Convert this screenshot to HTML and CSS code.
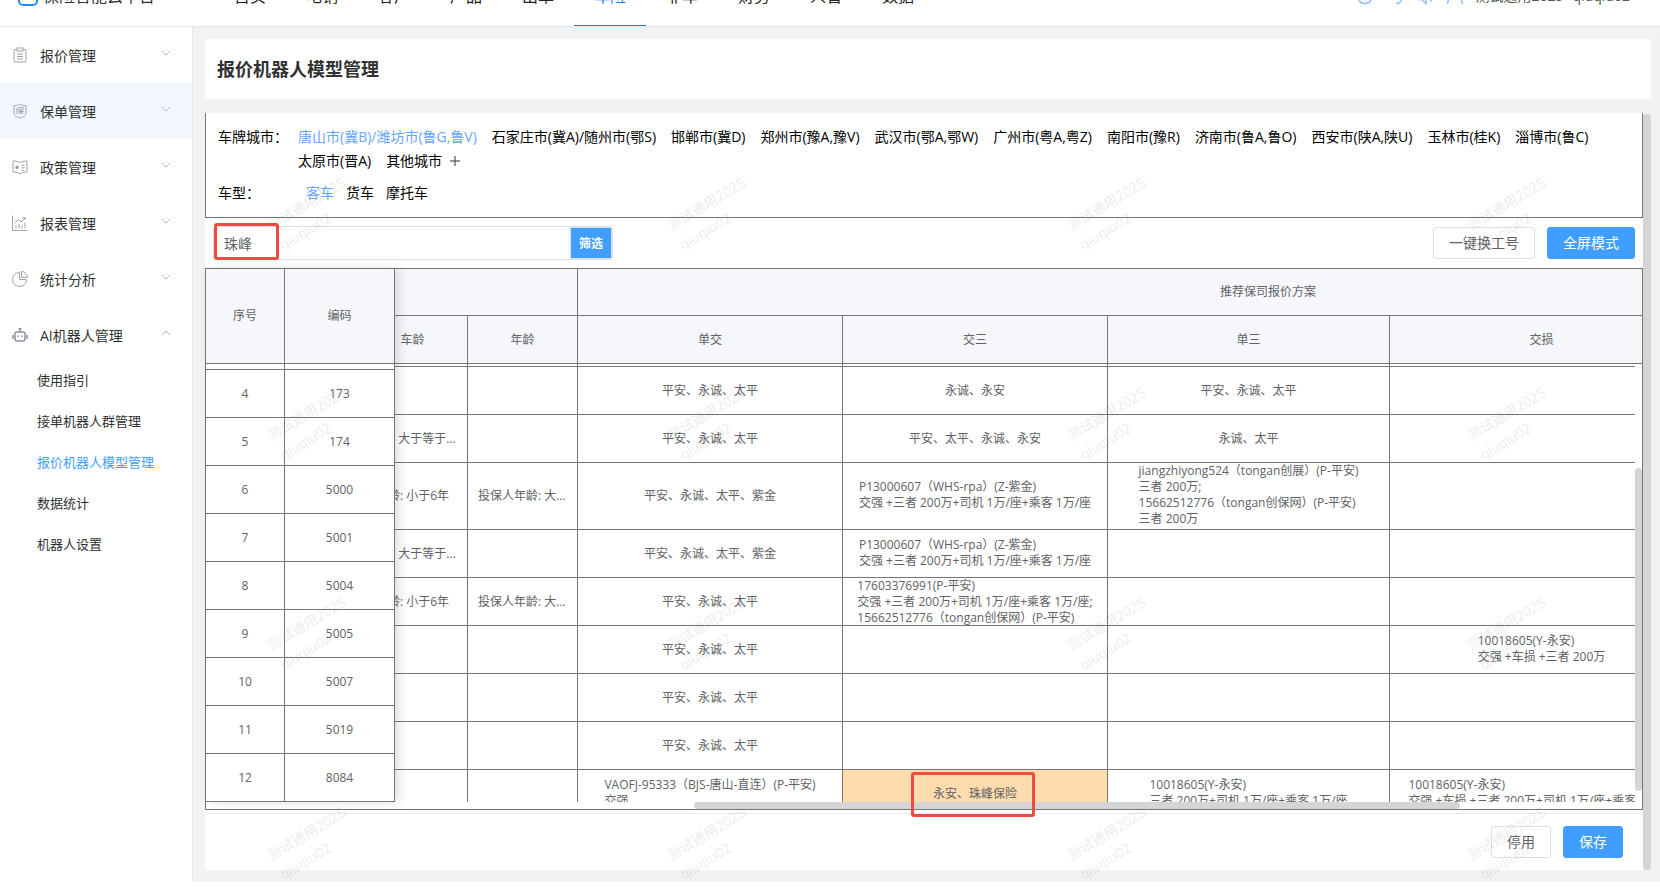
FILE: index.html
```html
<!DOCTYPE html>
<html lang="zh-CN">
<head>
  <meta charset="UTF-8">
  <meta name="viewport" content="width=device-width, initial-scale=1.0">
  <title>报价机器人模型管理</title>
  <link rel="stylesheet" href="styles.css">
</head>
<body>
  <!-- Header -->
  <header class="header">
    <a class="logo" href="#">
      <svg width="20" height="20" viewBox="0 0 20 20" fill="none" stroke="#1890ff" stroke-width="2"><rect x="1" y="1" width="18" height="18" rx="4"/></svg>
      <span>保险智能云平台</span>
    </a>
    <nav class="nav">
      <a href="#">首页</a>
      <a href="#">电销</a>
      <a href="#">客户</a>
      <a href="#">产品</a>
      <a href="#">出单</a>
      <a href="#" class="active">车险</a>
      <a href="#">非车</a>
      <a href="#">财务</a>
      <a href="#">人管</a>
      <a href="#">数据</a>
    </nav>
    <div class="user">
      <svg width="18" height="18" viewBox="0 0 18 18"><path d="M9 1l2 1.500 2.500-.200 1 2.300 2 1.400-.500 3 .500 3-2 1.400-1 2.300-2.500-.200L9 17l-2-1.500-2.500.200-1-2.300-2-1.400.500-3-.500-3 2-1.400 1-2.300 2.500.200z"/><circle cx="9" cy="9" r="3.500"/></svg>
      <svg width="18" height="18" viewBox="0 0 18 18"><path d="M3 9a6 6 0 0 1 12 0v3c0 3-2 4.500-5 4.500M3 9v3h2V8M15 9v3h-2V8"/></svg>
      <svg width="18" height="18" viewBox="0 0 18 18"><path d="M2 6.500h3.500L10 2.500v14l-4.500-4H2zM12.500 6.500c1.300 1.500 1.300 4 0 5.500M14.500 4c3 3 3 7.500 0 10.500"/></svg>
      <svg width="18" height="18" viewBox="0 0 18 18"><circle cx="9" cy="5" r="4"/><path d="M1.500 17c.500-5 3.500-7.500 7.500-7.500s7 2.500 7.500 7.500"/></svg>
      <span>测试通用2025--qiuqiu02</span>
    </div>
  </header>

  <div class="layout">
    <!-- Sidebar -->
    <aside class="sidebar">
      <a class="menu-item" href="#">
        <svg class="menu-icon" viewBox="0 0 16 16"><rect x="2" y="2.500" width="12" height="12.500" rx="1"/><rect x="5" y="1" width="6" height="3" fill="#fff"/><path d="M5 7h6M5 9.500h6M5 12h6"/></svg>
        <span>报价管理</span>
        <svg class="arrow" viewBox="0 0 10 6"><path d="M1 1l4 4 4-4"/></svg>
      </a>
      <a class="menu-item hover" href="#">
        <svg class="menu-icon" viewBox="0 0 16 16"><path d="M2 2.500c4 0 4.500-.500 6-1.500 1.500 1 2 1.500 6 1.500V10c0 2.500-3 4-6 5-3-1-6-2.500-6-5z"/><path d="M5.500 4.500L4.500 7M5 6.500V11M7 4.500h4v2.500H7zM6.500 8.500h5M9 7v4.500M8.500 9L6.500 11M9.500 9l2 2"/></svg>
        <span>保单管理</span>
        <svg class="arrow" viewBox="0 0 10 6"><path d="M1 1l4 4 4-4"/></svg>
      </a>
      <a class="menu-item" href="#">
        <svg class="menu-icon" viewBox="0 0 16 16"><path d="M1 2c3 0 5 .500 7 1.500C10 2.500 12 2 15 2v11c-3 0-5 .500-7 2-2-1.500-4-2-7-2z"/><path d="M5 6l.800 1.500 1.500.200-1.100 1 .200 1.600L5 9.500l-1.400.800.200-1.600-1.100-1 1.500-.200z" fill="#909399" stroke="none"/><path d="M9.500 6.500l3-.500M9.500 9l3-.500M9.500 11.500l3-.500"/></svg>
        <span>政策管理</span>
        <svg class="arrow" viewBox="0 0 10 6"><path d="M1 1l4 4 4-4"/></svg>
      </a>
      <a class="menu-item" href="#">
        <svg class="menu-icon" viewBox="0 0 16 16"><path d="M.500 .500v15h15M4 13.500v-3M7 13.500V9M10 13.500V10M13 13.500V7.500M3 8l3.500-3.500L9 7l4-4.500M10.500 2.500H13V5"/></svg>
        <span>报表管理</span>
        <svg class="arrow" viewBox="0 0 10 6"><path d="M1 1l4 4 4-4"/></svg>
      </a>
      <a class="menu-item" href="#">
        <svg class="menu-icon" viewBox="0 0 16 16"><path d="M7.500 1.500a7 7 0 1 0 7 7h-7z"/><path d="M9.500 .500v6h6a6 6 0 0 0-6-6z"/></svg>
        <span>统计分析</span>
        <svg class="arrow" viewBox="0 0 10 6"><path d="M1 1l4 4 4-4"/></svg>
      </a>
      <a class="menu-item" href="#">
        <svg class="menu-icon robot" viewBox="0 0 16 16"><rect x="3" y="5" width="10" height="9" rx="2"/><path d="M8 1v4M1 8v4M15 8v4M6 8.500v1.500M10 8.500v1.500M6.500 1.800h3"/></svg>
        <span>AI机器人管理</span>
        <svg class="arrow" viewBox="0 0 10 6"><path d="M1 5l4-4 4 4"/></svg>
      </a>
      <div class="submenu">
        <a href="#">使用指引</a>
        <a href="#">接单机器人群管理</a>
        <a href="#" class="active">报价机器人模型管理</a>
        <a href="#">数据统计</a>
        <a href="#">机器人设置</a>
      </div>
    </aside>

    <!-- Main -->
    <main class="main">
      <div class="title-card">
        <h1>报价机器人模型管理</h1>
      </div>

      <div class="scroll-area">
        <div class="panel">
          <!-- Filters -->
          <div class="filters">
            <div class="filter-row">
              <span class="filter-label">车牌城市：</span>
              <div class="filter-options">
                <a href="#" class="active">唐山市(冀B)/潍坊市(鲁G,鲁V)</a>
                <a href="#">石家庄市(冀A)/随州市(鄂S)</a>
                <a href="#">邯郸市(冀D)</a>
                <a href="#">郑州市(豫A,豫V)</a>
                <a href="#">武汉市(鄂A,鄂W)</a>
                <a href="#">广州市(粤A,粤Z)</a>
                <a href="#">南阳市(豫R)</a>
                <a href="#">济南市(鲁A,鲁O)</a>
                <a href="#">西安市(陕A,陕U)</a>
                <a href="#">玉林市(桂K)</a>
                <a href="#">淄博市(鲁C)</a>
                <a href="#">太原市(晋A)</a>
                <a href="#" class="more">其他城市 <svg width="10" height="10" viewBox="0 0 10 10"><path d="M5 0v10M0 5h10"/></svg></a>
              </div>
            </div>
            <div class="filter-row">
              <span class="filter-label">车型：</span>
              <div class="filter-options types">
                <a href="#" class="active">客车</a>
                <a href="#">货车</a>
                <a href="#">摩托车</a>
              </div>
            </div>
          </div>

          <!-- Toolbar -->
          <div class="toolbar">
            <div class="search">
              <input type="text" value="珠峰" aria-label="搜索">
              <button type="button">筛选</button>
              <div class="mark mark-search"></div>
            </div>
            <div class="toolbar-buttons">
              <button type="button" class="btn">一键换工号</button>
              <button type="button" class="btn btn-primary">全屏模式</button>
            </div>
          </div>

          <!-- Table -->
          <div class="grid">
            <div class="grid-fixed">
              <table class="fixed-table">
                <colgroup><col class="w-index"><col class="w-narrow"></colgroup>
                <thead>
                  <tr><th>序号</th><th>编码</th></tr>
                </thead>
                <tbody>
                  <tr class="cut"><td></td><td></td></tr>
                  <tr><td>4</td><td>173</td></tr>
                  <tr><td>5</td><td>174</td></tr>
                  <tr><td>6</td><td>5000</td></tr>
                  <tr><td>7</td><td>5001</td></tr>
                  <tr><td>8</td><td>5004</td></tr>
                  <tr><td>9</td><td>5005</td></tr>
                  <tr><td>10</td><td>5007</td></tr>
                  <tr><td>11</td><td>5019</td></tr>
                  <tr><td>12</td><td>8084</td></tr>
                </tbody>
              </table>
            </div>

            <div class="grid-main">
              <div class="grid-head">
                <table class="main-table">
                  <colgroup><col class="w-narrow"><col class="w-narrow"><col class="w-plan"><col class="w-plan"><col class="w-plan-3"><col class="w-plan-4"><col class="w-plan"></colgroup>
                  <thead>
                    <tr class="group"><th colspan="2"></th><th colspan="5">推荐保司报价方案</th></tr>
                    <tr><th>车龄</th><th>年龄</th><th>单交</th><th>交三</th><th>单三</th><th>交损</th><th></th></tr>
                  </thead>
                </table>
              </div>
              <div class="grid-body">
                <table class="main-table">
                  <colgroup><col class="w-narrow"><col class="w-narrow"><col class="w-plan"><col class="w-plan"><col class="w-plan-3"><col class="w-plan-4"><col class="w-plan"></colgroup>
                  <tbody>
                    <tr class="cut"><td></td><td></td><td></td><td></td><td></td><td></td><td></td></tr>
                    <tr>
                      <td></td><td></td>
                      <td>平安、永诚、太平</td>
                      <td>永诚、永安</td>
                      <td>平安、永诚、太平</td>
                      <td></td><td></td>
                    </tr>
                    <tr>
                      <td><div class="ellipsis">车龄: 大于等于6年</div></td><td></td>
                      <td>平安、永诚、太平</td>
                      <td>平安、太平、永诚、永安</td>
                      <td>永诚、太平</td>
                      <td></td><td></td>
                    </tr>
                    <tr>
                      <td><div class="ellipsis">车龄: 小于6年</div></td>
                      <td><div class="ellipsis">投保人年龄: 大于等于</div></td>
                      <td>平安、永诚、太平、紫金</td>
                      <td><div class="plan">P13000607（WHS-rpa）(Z-紫金)<br>交强 +三者 200万+司机 1万/座+乘客 1万/座</div></td>
                      <td><div class="plan">jiangzhiyong524（tongan创展）(P-平安)<br>三者 200万;<br>15662512776（tongan创保网）(P-平安)<br>三者 200万</div></td>
                      <td></td><td></td>
                    </tr>
                    <tr>
                      <td><div class="ellipsis">车龄: 大于等于6年</div></td><td></td>
                      <td>平安、永诚、太平、紫金</td>
                      <td><div class="plan">P13000607（WHS-rpa）(Z-紫金)<br>交强 +三者 200万+司机 1万/座+乘客 1万/座</div></td>
                      <td></td><td></td><td></td>
                    </tr>
                    <tr>
                      <td><div class="ellipsis">车龄: 小于6年</div></td>
                      <td><div class="ellipsis">投保人年龄: 大于等于</div></td>
                      <td>平安、永诚、太平</td>
                      <td><div class="plan clamp">17603376991(P-平安)<br>交强 +三者 200万+司机 1万/座+乘客 1万/座;<br>15662512776（tongan创保网）(P-平安)</div></td>
                      <td></td><td></td><td></td>
                    </tr>
                    <tr>
                      <td></td><td></td>
                      <td>平安、永诚、太平</td>
                      <td></td><td></td>
                      <td><div class="plan">10018605(Y-永安)<br>交强 +车损 +三者 200万</div></td>
                      <td></td>
                    </tr>
                    <tr><td></td><td></td><td>平安、永诚、太平</td><td></td><td></td><td></td><td></td></tr>
                    <tr><td></td><td></td><td>平安、永诚、太平</td><td></td><td></td><td></td><td></td></tr>
                    <tr>
                      <td></td><td></td>
                      <td><div class="plan">VAOFJ-95333（BJS-唐山-直连）(P-平安)<br>交强</div></td>
                      <td class="hit">永安、珠峰保险</td>
                      <td><div class="plan">10018605(Y-永安)<br>三者 200万+司机 1万/座+乘客 1万/座</div></td>
                      <td><div class="plan">10018605(Y-永安)<br>交强 +车损 +三者 200万+司机 1万/座+乘客 1万/座</div></td>
                      <td></td>
                    </tr>
                  </tbody>
                </table>
              </div>
            </div>
            <div class="thumb thumb-x"></div>
            <div class="thumb thumb-y"></div>
            <div class="mark mark-cell"></div>
          </div>

          <!-- Footer -->
          <div class="panel-footer">
            <button type="button" class="btn">停用</button>
            <button type="button" class="btn btn-primary">保存</button>
          </div>

          <svg class="watermark" aria-hidden="true">
            <defs>
              <pattern id="wm" width="400" height="210" patternUnits="userSpaceOnUse">
                <g transform="rotate(-31 101 90)">
                  <text x="101" y="96" text-anchor="middle">测试通用2025</text>
                  <text x="86" y="119" text-anchor="middle">qiuqiu02</text>
                </g>
              </pattern>
            </defs>
            <rect width="100%" height="100%" fill="url(#wm)"/>
          </svg>
        </div>
        <div class="page-scrollbar"></div>
      </div>
    </main>
  </div>
</body>
</html>
```
FILE: styles.css
```css
/* Global Styles */
* {
  margin: 0;
  padding: 0;
  box-sizing: border-box;
}

body {
  font-family: 'Open Sans', 'Noto Sans CJK SC', sans-serif;
  font-size: 14px;
  color: #303133;
  background: #fff;
  overflow: hidden;
}

a {
  color: inherit;
  text-decoration: none;
}

button,
input {
  font-family: inherit;
}

svg {
  flex: none;
  fill: none;
}

/* Header, scrolled partly out of view */
.header {
  height: 61px;
  margin-top: -34px;
  display: flex;
  align-items: center;
  border-bottom: 1px solid #e6e6e6;
  font-size: 16px;
  line-height: 24px;
}

.logo {
  width: 214px;
  padding-left: 18px;
  display: flex;
  align-items: center;
  gap: 5px;
}

.nav {
  display: flex;
  align-self: stretch;
  color: #222;
}

.nav a {
  width: 72px;
  display: flex;
  align-items: center;
  justify-content: center;
  border-bottom: 1px solid transparent;
}

.nav a.active {
  color: #1b7ef2;
  border-color: #1b7ef2;
}

.user {
  margin-left: auto;
  padding-right: 30px;
  display: flex;
  align-items: center;
  gap: 12px;
  font-size: 14px;
  color: #555;
}

.user svg {
  stroke: #8fc0fb;
  stroke-width: 1.5;
}

/* Layout */
.layout {
  display: flex;
}

.sidebar {
  width: 193px;
  flex: none;
  border-right: 1px solid #e6e6e6;
}

.menu-item {
  height: 56px;
  padding: 0 21px 0 12px;
  display: flex;
  align-items: center;
}

.menu-item.hover {
  background: #f2f8fe;
}

.menu-item span {
  margin-left: 12px;
  flex: 1;
}

.menu-icon {
  width: 16px;
  height: 16px;
  stroke: #a0a3a9;
}

.menu-icon.robot {
  stroke: #8b919e;
  stroke-width: 1.5;
}

.arrow {
  width: 10px;
  height: 6px;
  margin-bottom: 4px;
  stroke: #b4b7bd;
}

.submenu {
  margin-top: -1px;
  padding-left: 37px;
  display: flex;
  flex-direction: column;
  gap: 4px;
  font-size: 13px;
  line-height: 37px;
}

.submenu .active {
  color: #409eff;
}

.main {
  flex: 1;
  min-width: 0;
  padding: 12px 9px 12px 12px;
  background: #f1f2f4;
}

.title-card {
  height: 60px;
  padding: 0 12px;
  margin-bottom: 14px;
  display: flex;
  align-items: center;
  background: #fff;
}

.title-card h1 {
  font-size: 18px;
  line-height: 28px;
}

.scroll-area {
  display: flex;
}

.page-scrollbar {
  width: 8px;
  margin-top: 1px;
  border-radius: 4px;
  background: #d5d5d5;
}

.panel {
  flex: 1;
  min-width: 0;
  position: relative;
  background: #fff;
}

/* Filters */
.filters {
  padding: 12px;
  border: 1px solid #777;
  border-top: none;
  color: #000;
  line-height: 24px;
}

.filter-row {
  display: flex;
}

.filter-row + .filter-row {
  margin-top: 8px;
}

.filter-label {
  width: 80px;
  flex: none;
}

.filter-options {
  display: flex;
  flex-wrap: wrap;
  column-gap: 15px;
}

.filter-options.types {
  padding-left: 8px;
  column-gap: 12px;
}

.filter-options .active {
  color: #66a6ff;
}

.more svg {
  margin-left: 4px;
  stroke: #333;
}

/* Toolbar */
.toolbar {
  height: 50px;
  padding: 0 8px;
  display: flex;
  align-items: center;
  justify-content: space-between;
}

.search {
  width: 400px;
  height: 34px;
  position: relative;
  display: flex;
  border: 1px solid #dcdfe6;
  border-radius: 3px;
}

.search input {
  flex: 1;
  min-width: 0;
  padding: 0 10px;
  border: none;
  outline: none;
  font-size: 14px;
  color: #606266;
  background: transparent;
}

.search button {
  width: 42px;
  border: 1px solid #dcdfe6;
  background: #409eff;
  color: #fff;
  font-size: 12px;
  font-weight: bold;
}

.toolbar-buttons {
  display: flex;
  gap: 12px;
}

.btn {
  height: 32px;
  padding: 0 15px;
  border: 1px solid #dcdfe6;
  border-radius: 3px;
  background: #fff;
  color: #606266;
  font-size: 14px;
  line-height: 20px;
}

.btn-primary {
  border-color: #409eff;
  background: #409eff;
  color: #fff;
}

/* Red highlight frames */
.mark {
  position: absolute;
  z-index: 4;
  border: 3px solid #f04b40;
  border-radius: 3px;
  pointer-events: none;
}

.mark-search {
  top: -4px;
  left: 0;
  width: 65px;
  height: 37px;
}

.mark-cell {
  left: 705px;
  bottom: -8px;
  width: 124px;
  height: 45px;
}

/* Table */
.grid {
  position: relative;
  display: flex;
  padding-bottom: 7px;
  border: 1px solid #777;
  font-size: 12px;
  line-height: 16px;
  color: #606266;
}

.grid-fixed {
  flex: none;
  position: relative;
  z-index: 2;
  background: #fff;
  box-shadow: 4px 0 10px rgba(0, 0, 0, 0.12);
}

.grid-main {
  flex: 1;
  min-width: 0;
}

.grid-head,
.grid-body {
  overflow: hidden;
}

.grid-body {
  max-height: 438px;
  margin-right: 7px;
}

table {
  table-layout: fixed;
  border-collapse: separate;
  border-spacing: 0;
}

.fixed-table {
  width: 189px;
}

.main-table {
  width: 1601px;
  margin-left: -37px;
}

.w-index { width: 79px; }
.w-narrow { width: 110px; }
.w-plan { width: 265px; }
.w-plan-3 { width: 282px; }
.w-plan-4 { width: 304px; }

th,
td {
  height: 48px;
  border-right: 1px solid #777;
  border-bottom: 1px solid #777;
  text-align: center;
  vertical-align: middle;
}

th {
  background: #f5f7fa;
  font-weight: normal;
}

.fixed-table th {
  height: 95px;
}

.group th {
  height: 47px;
}

.fixed-table .cut td {
  height: 6px;
}

.main-table .cut td {
  height: 3px;
}

.ellipsis {
  padding: 0 10px;
  overflow: hidden;
  white-space: nowrap;
  text-overflow: ellipsis;
}

.plan {
  display: inline-block;
  padding-bottom: 2px;
  text-align: left;
  white-space: nowrap;
  vertical-align: top;
}

.plan.clamp {
  height: 47px;
  overflow: hidden;
}

.hit {
  background: #ffdcad;
}

/* Scrollbar thumbs */
.thumb {
  position: absolute;
  z-index: 3;
  border-radius: 4px;
  background: #d5d5d5;
}

.thumb-x {
  left: 34%;
  bottom: 0;
  width: 766px;
  height: 7px;
}

.thumb-y {
  right: 0;
  bottom: 18px;
  width: 7px;
  height: 323px;
}

/* Panel footer */
.panel-footer {
  margin-top: 3px;
  padding: 12px 20px;
  display: flex;
  justify-content: flex-end;
  gap: 12px;
  border-top: 1px solid #ebebeb;
}

/* Watermark */
.watermark {
  position: absolute;
  top: 0;
  left: 0;
  z-index: 5;
  width: 100%;
  height: calc(100% + 12px);
  pointer-events: none;
}

.watermark text {
  font-size: 14px;
  fill: rgba(0, 0, 0, 0.08);
}
```
